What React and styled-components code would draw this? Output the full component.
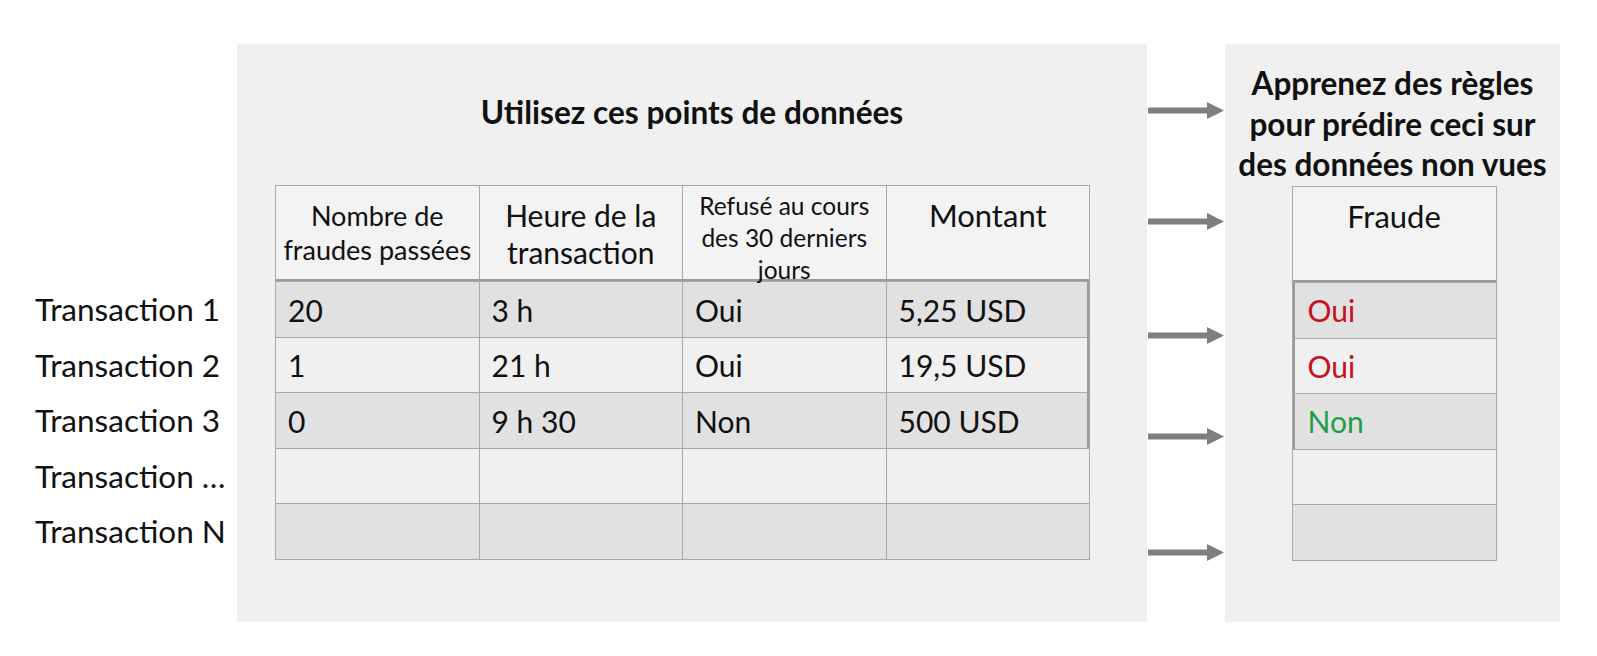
import React from "react";
import styled, { createGlobalStyle } from "styled-components";

const Global = createGlobalStyle`
  html, body { margin: 0; padding: 0; background: #ffffff; }
  body { font-family: Lato, "Open Sans", "Liberation Sans", sans-serif; color: #111; }
  * { box-sizing: border-box; }
`;

const BORDER = "#a8a8a8";
const THICK = "#9a9a9a";
const ROW_H = [56, 55, 56, 55, 56];

const Stage = styled.div`
  display: flex;
  align-items: flex-start;
  width: 1597px;
  height: 656px;
  padding-top: 44px;
`;

const LabelColumn = styled.div`
  width: 237px;
  padding-top: 237px;
  padding-left: 35px;
  display: flex;
  flex-direction: column;
`;

const Label = styled.div`
  height: ${(p) => p.$h}px;
  display: flex;
  align-items: center;
  font-size: 31.5px;
  white-space: nowrap;
`;

const Panel = styled.div`
  width: ${(p) => p.$w}px;
  height: 578px;
  background: #f0f0f0;
  display: flex;
  flex-direction: column;
  align-items: ${(p) => (p.$center ? "center" : "stretch")};
`;

const Title = styled.h1`
  margin: 0;
  height: 141px;
  padding-bottom: 6px;
  display: flex;
  align-items: center;
  justify-content: center;
  font-size: 31.6px;
  font-weight: 700;
`;

const SideTitle = styled.h2`
  margin: 0;
  padding-top: 19px;
  padding-bottom: 1px;
  text-align: center;
  font-size: 31.5px;
  line-height: 40.5px;
  font-weight: 700;
  white-space: nowrap;
`;

const TableWrap = styled.div`
  padding-left: 38px;
`;

const Grid = styled.div`
  display: grid;
  grid-template-columns: repeat(${(p) => p.$cols}, ${(p) => p.$colW}px);
  grid-template-rows: 96px ${ROW_H.map((h) => h + "px").join(" ")};
  border-top: 1px solid ${BORDER};
  border-left: 1px solid ${BORDER};
  width: max-content;
  margin-left: ${(p) => p.$shift || 0}px;
`;

const HeadCell = styled.div`
  background: #f3f3f3;
  border-right: 1px solid ${BORDER};
  border-bottom: 1px solid ${BORDER};
  box-shadow: inset 0 -2px 0 ${THICK};
  text-align: center;
  font-size: ${(p) => p.$size}px;
  line-height: ${(p) => p.$lh}px;
  padding-top: ${(p) => p.$pt}px;
  overflow: visible;
  white-space: nowrap;
  position: relative;
  z-index: 1;
`;

const Cell = styled.div`
  background: ${(p) => (p.$dark ? "#e1e1e1" : "#f0f0f0")};
  border-right: 1px solid ${BORDER};
  border-bottom: 1px solid ${BORDER};
  box-shadow: ${(p) =>
    p.$thickRight
      ? `inset -2px 0 0 ${THICK}`
      : p.$thickLeft
      ? `inset 2px 0 0 ${THICK}`
      : "none"};
  display: flex;
  align-items: center;
  padding-left: ${(p) => p.$pl || 12}px;
  font-size: 30px;
  color: ${(p) => p.$color || "#111"};
  white-space: nowrap;
`;

const ArrowColumn = styled.div`
  width: 78px;
  padding-left: 1px;
  display: flex;
  flex-direction: column;
`;

const ArrowBox = styled.div`
  margin-top: ${(p) => p.$mt}px;
  height: 17px;
  line-height: 0;
`;

const Arrow = ({ mt }) => (
  <ArrowBox $mt={mt}>
    <svg width="76" height="17" viewBox="0 0 76 17">
      <rect x="0" y="5.5" width="60" height="6" fill="#7f7f7f" />
      <polygon points="59,0 76,8.5 59,17" fill="#7f7f7f" />
    </svg>
  </ArrowBox>
);

const headers = [
  { lines: ["Nombre de", "fraudes passées"], size: 27, lh: 34, pt: 13 },
  { lines: ["Heure de la", "transaction"], size: 30, lh: 37, pt: 11 },
  { lines: ["Refusé au cours", "des 30 derniers", "jours"], size: 24.5, lh: 32, pt: 4 },
  { lines: ["Montant"], size: 31, lh: 37, pt: 11 },
];

const rows = [
  { label: "Transaction 1", cells: ["20", "3 h", "Oui", "5,25 USD"], fraud: "Oui", color: "#c8101a", marked: true },
  { label: "Transaction 2", cells: ["1", "21 h", "Oui", "19,5 USD"], fraud: "Oui", color: "#c8101a", marked: true },
  { label: "Transaction 3", cells: ["0", "9 h 30", "Non", "500 USD"], fraud: "Non", color: "#1e9e4a", marked: true },
  { label: "Transaction …", cells: ["", "", "", ""], fraud: "" },
  { label: "Transaction N", cells: ["", "", "", ""], fraud: "" },
];

const HeadText = ({ lines }) =>
  lines.map((l, i) => (
    <React.Fragment key={i}>
      {l}
      {i < lines.length - 1 && <br />}
    </React.Fragment>
  ));

export default function App() {
  return (
    <>
      <Global />
      <Stage>
        <LabelColumn>
          {rows.map((r, i) => (
            <Label key={r.label} $h={ROW_H[i]}>
              {r.label}
            </Label>
          ))}
        </LabelColumn>

        <Panel $w={910}>
          <Title>Utilisez ces points de données</Title>
          <TableWrap>
            <Grid $cols={4} $colW={203.5}>
              {headers.map((h, i) => (
                <HeadCell key={i} $size={h.size} $lh={h.lh} $pt={h.pt}>
                  <HeadText lines={h.lines} />
                </HeadCell>
              ))}
              {rows.map((r, ri) =>
                r.cells.map((c, ci) => (
                  <Cell
                    key={ri + "-" + ci}
                    $dark={ri % 2 === 0}
                    $thickRight={r.marked && ci === 3}
                  >
                    {c}
                  </Cell>
                ))
              )}
            </Grid>
          </TableWrap>
        </Panel>

        <ArrowColumn>
          <Arrow mt={57.5} />
          <Arrow mt={94} />
          <Arrow mt={97} />
          <Arrow mt={84} />
          <Arrow mt={99} />
        </ArrowColumn>

        <Panel $w={335} $center>
          <SideTitle>
            Apprenez des règles
            <br />
            pour prédire ceci sur
            <br />
            des données non vues
          </SideTitle>
          <Grid $cols={1} $colW={204} $shift={3}>
            <HeadCell $size={31} $lh={37} $pt={11}>
              Fraude
            </HeadCell>
            {rows.map((r, ri) => (
              <Cell
                key={ri}
                $dark={ri % 2 === 0}
                $thickLeft={r.marked}
                $color={r.color}
                $pl={15}
              >
                {r.fraud}
              </Cell>
            ))}
          </Grid>
        </Panel>
      </Stage>
    </>
  );
}
